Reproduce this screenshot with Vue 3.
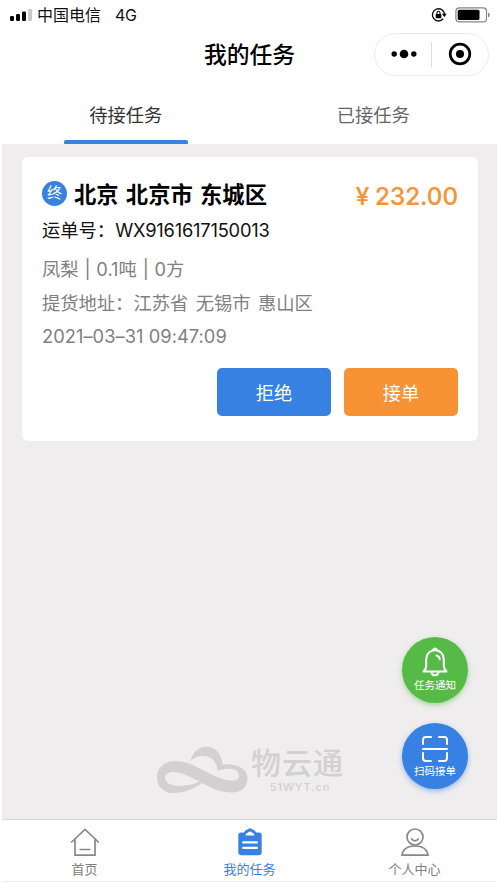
<script setup>
import { ref } from 'vue'

const tabs = ['待接任务', '已接任务']
const active = ref(0)
</script>

<template>
  <div class="phone">
    <header class="status">
      <svg class="signal" width="22" height="14" viewBox="0 0 22 14">
        <rect x="0" y="8" width="4" height="5" rx="1.2" />
        <rect x="6" y="6" width="4" height="7" rx="1.2" />
        <rect x="12" y="3.5" width="4" height="9.5" rx="1.2" />
        <rect x="18" y="1" width="4" height="12" rx="1.2" fill="#c8c8c8" />
      </svg>
      <span class="carrier">中国电信</span>
      <span class="net">4G</span>
      <svg class="lock" width="16" height="16" viewBox="0 0 16 16">
        <path d="M12.2 11.8A6.1 6.1 0 1 1 13.6 7.2" fill="none" stroke="#111" stroke-width="1.4" />
        <path d="M10.9 6.8h4.9l-2.45 3.2z" />
        <rect x="4.7" y="7" width="5.6" height="4.3" rx=".6" />
        <path d="M6 7V5.7a1.5 1.5 0 0 1 3 0V7" fill="none" stroke="#111" stroke-width="1.1" />
      </svg>
      <svg class="battery" width="36" height="16" viewBox="0 0 36 16">
        <rect x=".9" y=".9" width="30.6" height="14" rx="3.5" fill="none" stroke="#858585" stroke-width="1.2" />
        <rect x="2.7" y="2.7" width="21.8" height="10.4" rx="1.5" />
        <path d="M33 5.5q1.8.6 1.8 2.4T33 10.3z" fill="#858585" />
      </svg>
    </header>

    <div class="nav">
      <h1>我的任务</h1>
      <div class="capsule">
        <svg width="26" height="12" viewBox="0 0 26 12">
          <circle cx="3.2" cy="6" r="2.7" />
          <circle cx="13" cy="6" r="4.3" />
          <circle cx="22.8" cy="6" r="2.7" />
        </svg>
        <i></i>
        <svg width="24" height="24" viewBox="0 0 24 24">
          <circle cx="12" cy="12" r="9.8" fill="none" stroke="#000" stroke-width="2.7" />
          <circle cx="12" cy="12" r="4" />
        </svg>
      </div>
    </div>

    <nav class="tabs">
      <button v-for="(t, i) in tabs" :key="t" :class="{ on: active === i }" @click="active = i">{{ t }}</button>
    </nav>

    <main>
      <article class="card">
        <div class="head">
          <span class="badge">终</span>
          <h2>北京 北京市 东城区</h2>
          <div class="price"><span class="yen">¥</span>232.00</div>
        </div>
        <p class="order">运单号：<span>WX9161617150013</span></p>
        <p class="goods">凤梨 | 0.1吨 | 0方</p>
        <p class="addr">提货地址：江苏省 无锡市 惠山区</p>
        <p class="time">2021–03–31 09:47:09</p>
        <div class="actions">
          <button class="reject">拒绝</button>
          <button class="accept">接单</button>
        </div>
      </article>

      <div class="watermark">
        <svg width="92" height="48" viewBox="0 0 92 48">
          <path fill="#d2d0d1" fill-rule="evenodd" d="M33.5 15C36 6 42 .8 49 .8C58 .8 64.5 7 65.5 18.5C80 17 90.5 23 90.5 32C90.5 41 84 46.500 75 46.500C64 46.500 55 42.500 45 37C36 43 28 47 16 47C6 47 0 40 0 31.500C0 21.500 8 15 18 15C33 15 46 25 60 31C72 36 82 36 82 30C82 23 74 21 60.500 24.500C60 16 55 10.500 47 10C41 9.600 37 11.500 33.500 15ZM42.500 35.500C33 31 24 26 16 26C11 26 8 28.500 8 32C8 41 29 42.500 42.500 35.500Z" />
        </svg>
        <div class="brand">
          <b>物云通</b>
          <small>51WYT.cn</small>
        </div>
      </div>

      <div class="floats">
        <button class="float green">
          <svg width="28" height="30" viewBox="0 0 28 30" fill="none" stroke="#fff" stroke-width="2" stroke-linecap="round" stroke-linejoin="round">
            <path d="M2.5 24.5c2-1.7 2.7-3.3 2.7-6v-6C5.2 7 9 3.2 14 3.2s8.8 3.8 8.8 9.3v6c0 2.7.7 4.3 2.7 6z" />
            <path d="M12 3q2-3 4 0M10.5 25.5c.8 3.8 6.2 3.8 7 0M15.5 8.5q3 .8 3.2 3.8" />
          </svg>
          <span>任务通知</span>
        </button>
        <button class="float blue">
          <svg width="28" height="28" viewBox="0 0 28 28" fill="none" stroke="#fff" stroke-width="2" stroke-linecap="round">
            <path d="M2 9V5q0-3 3-3h5M18 2h5q3 0 3 3v4M2 18v5q0 3 3 3h5M18 26h5q3 0 3-3v-5M2 14h24" />
          </svg>
          <span>扫码接单</span>
        </button>
      </div>
    </main>

    <footer>
      <a>
        <svg width="30" height="30" viewBox="0 0 30 30" fill="none" stroke="#888" stroke-width="1.7">
          <path d="M1.2 15.5 15 2.5 28.8 15.5M5 12.5V28.1H25V12.5M9.5 22.5h11" />
        </svg>
        <span>首页</span>
      </a>
      <a class="current">
        <svg width="30" height="30" viewBox="0 0 30 30">
          <path fill="#3781e3" d="M6 5.5h3Q10 3 12 2.800Q15 -.2 18 2.800Q20 3 21 5.500h3q2.700 0 2.700 2.700v17q0 3-3 3H6.300q-3 0-3-3v-17Q3.300 5.500 6 5.500z" />
          <path fill="#fff" d="M10.5 8.5Q10.800 6 13 5.600Q15 3.200 17 5.600Q19.200 6 19.500 8.500z" />
          <path d="M7.3 15.3h15.4M7.3 20.8h15.4" fill="none" stroke="#fff" stroke-width="2.200" />
        </svg>
        <span>我的任务</span>
      </a>
      <a>
        <svg width="30" height="30" viewBox="0 0 30 30" fill="none" stroke="#888" stroke-width="1.7">
          <circle cx="15" cy="10" r="8" />
          <path d="M11.2 11.5q3.8 4.6 7.6 0M2 28.200C3 21.500 8 19 15 19s12 2.500 13 9.200z" />
        </svg>
        <span>个人中心</span>
      </a>
    </footer>
  </div>
</template>

<style>
body {
  background: #fff;
}
</style>

<style scoped>
* {
  box-sizing: border-box;
}
.phone {
  width: 497px;
  height: 883px;
  padding-left: 2px;
  display: flex;
  flex-direction: column;
  overflow: hidden;
  background: #fff;
  color: #111;
  font-family: Inter, "Noto Sans CJK SC", sans-serif;
}
svg {
  display: block;
  flex: none;
}
h1, h2, p {
  margin: 0;
  white-space: nowrap;
}
button {
  border: 0;
  padding: 0;
  font-family: inherit;
}
.status {
  height: 30px;
  display: flex;
  align-items: center;
  padding: 0 6px 0 8px;
  font-size: 16px;
  line-height: 20px;
}
.carrier { margin-left: 5px; }
.net {
  margin-left: 14px;
  letter-spacing: -.4px;
}
.lock { margin-left: auto; }
.battery { margin-left: 8px; }
.nav {
  height: 48px;
  display: grid;
  grid-template-columns: 1fr auto 1fr;
  align-items: center;
  padding-right: 8px;
}
h1 {
  grid-column: 2;
  font-size: 22.8px;
  line-height: 30px;
  font-weight: 500;
  color: #000;
  padding: 2px 0 0 8px;
}
.capsule {
  width: 115px;
  height: 43px;
  justify-self: end;
  display: flex;
  align-items: center;
  border: 1px solid #ebebeb;
  border-radius: 22px;
  padding-left: 16px;
}
.capsule i {
  width: 1px;
  height: 25px;
  background: #ddd;
  margin: 0 16px 0 14px;
}
.tabs {
  height: 66px;
  display: flex;
}
.tabs button {
  flex: 1;
  display: flex;
  flex-direction: column;
  align-items: center;
  justify-content: flex-end;
  gap: 11px;
  background: none;
  color: #666;
  font-size: 18.3px;
  line-height: 27px;
}
.tabs button::after {
  content: "";
  width: 124px;
  height: 4px;
  border-radius: 2px 2px 1px 1px;
}
.tabs .on { color: #333; }
.tabs .on::after { background: #3781e3; }
main {
  position: relative;
  flex: 1;
  background: #efedee;
  padding: 13px 19px 0 20px;
}
.card {
  height: 284px;
  border-radius: 6px;
  background: #fff;
  padding: 20px 20px 0;
  color: #808080;
  font-size: 18.3px;
}
.head {
  height: 34px;
  display: flex;
  align-items: center;
}
.badge {
  width: 25px;
  height: 25px;
  margin-top: -2px;
  border-radius: 50%;
  background: #3781e3;
  color: #fff;
  font-size: 15px;
  line-height: 24px;
  text-align: center;
}
h2 {
  margin-left: 7px;
  padding-top: 1px;
  color: #000;
  font-size: 22.3px;
  line-height: 32px;
  font-weight: 700;
  word-spacing: 2px;
}
.price {
  margin-left: auto;
  padding-top: 5px;
  display: flex;
  gap: 6px;
  color: #f79235;
  font-size: 24.2px;
  line-height: 30px;
  font-weight: 500;
  -webkit-text-stroke: .2px #f79235;
}
.order {
  color: #111;
  line-height: 38px;
}
.order span { letter-spacing: -.2px; }
.goods {
  line-height: 41px;
  word-spacing: .7px;
}
.addr {
  line-height: 26px;
  word-spacing: 2.3px;
}
.time {
  line-height: 40px;
  letter-spacing: .04px;
}
.actions {
  display: flex;
  justify-content: flex-end;
  gap: 13px;
  margin-top: 12px;
}
.actions button {
  width: 114px;
  height: 48px;
  border-radius: 5px;
  color: #fff;
  font-size: 18.3px;
}
.reject { background: #3781e3; }
.accept { background: #f79235; }
.watermark {
  position: absolute;
  left: 155px;
  top: 602px;
  display: flex;
  color: #d2d0d1;
}
.brand {
  margin: -3px 0 0 2px;
  display: flex;
  flex-direction: column;
  align-items: center;
}
.brand b {
  font-size: 30px;
  line-height: 40px;
  font-weight: 500;
  letter-spacing: 1px;
}
.brand small {
  padding-left: 5px;
  font-size: 11px;
  line-height: 14px;
  margin-top: -3px;
  font-weight: 500;
  letter-spacing: .9px;
}
.floats {
  position: absolute;
  right: 29px;
  top: 493px;
  display: flex;
  flex-direction: column;
  gap: 20px;
}
.float {
  width: 66px;
  height: 66px;
  border-radius: 50%;
  display: flex;
  flex-direction: column;
  align-items: center;
  padding-top: 10px;
  color: #fff;
  font-size: 10.5px;
  line-height: 17px;
}
.green {
  background: #56ba47;
  box-shadow: 0 2px 5px rgba(86, 186, 71, .5);
}
.blue {
  background: #3781e3;
  padding-top: 12px;
  box-shadow: 0 2px 5px rgba(55, 129, 227, .5);
}
footer {
  height: 63px;
  margin-bottom: 1px;
  display: grid;
  grid-template-columns: repeat(3, 1fr);
  border-top: 1px solid #d8d8d8;
  border-bottom: 1px solid #eee;
  color: #808080;
  font-size: 13px;
  line-height: 20px;
}
footer a {
  display: flex;
  flex-direction: column;
  align-items: center;
  padding-top: 7px;
  gap: 2px;
}
.current { color: #3781e3; }
</style>
